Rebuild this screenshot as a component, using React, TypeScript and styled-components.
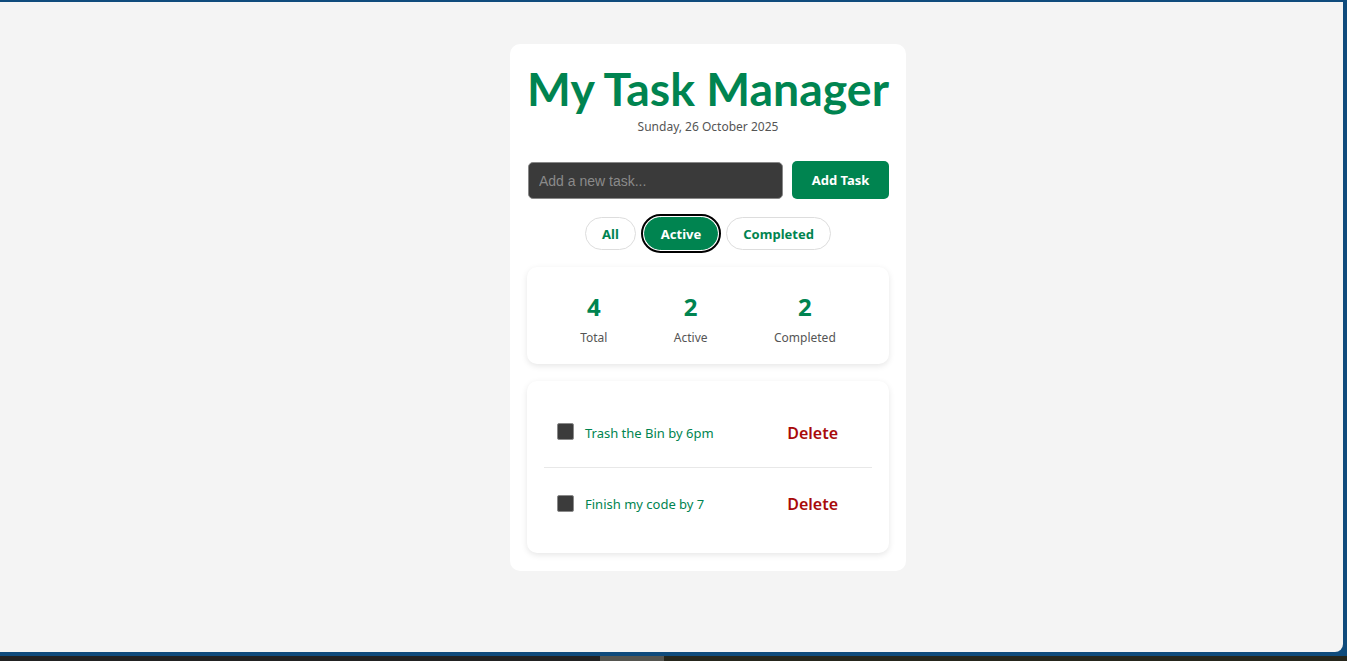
import React from "react";
import styled, { createGlobalStyle } from "styled-components";

const GlobalStyle = createGlobalStyle`
  html, body { margin: 0; padding: 0; }
  body { font-family: "Noto Sans", "Open Sans", sans-serif; overflow: hidden; }
  * { box-sizing: border-box; }
`;

const green = "#008450";

const Frame = styled.div`
  width: 1347px;
  height: 661px;
  background: #0f4b7c;
  display: flex;
  flex-direction: column;
`;

const Viewport = styled.div`
  height: 650px;
  margin: 2px 4px 4px 0;
  background: #f4f4f4;
  border-bottom-right-radius: 8px;
  display: flex;
  justify-content: center;
  align-items: flex-start;
  padding-top: 42px;
`;

const Taskbar = styled.div`
  flex: 1;
  display: flex;
  background: #202020;
`;

const TaskSeg = styled.div<{ $w: number; $c: string }>`
  width: ${(p) => p.$w}px;
  background: ${(p) => p.$c};
  flex: ${(p) => (p.$w === 0 ? 1 : "none")};
`;

const Card = styled.div`
  width: 396px;
  background: #fff;
  border-radius: 10px;
  padding: 18px 17px 18px 17px;
  margin-left: 73px;
  display: flex;
  flex-direction: column;
`;

const Title = styled.h1`
  margin: 0;
  text-align: center;
  color: ${green};
  font-family: Lato, "Noto Sans", sans-serif;
  font-size: 46.4px;
  font-weight: 700;
  line-height: 52px;
  white-space: nowrap;
`;

const DateText = styled.p`
  margin: 5px 0 0;
  text-align: center;
  color: #555;
  font-size: 12px;
  line-height: 16px;
`;

const InputRow = styled.div`
  display: flex;
  gap: 9px;
  margin-top: 26px;
  padding-left: 1px;
`;

const TaskInput = styled.input`
  flex: 1;
  height: 37px;
  margin-top: 1px;
  background: #3a3a3a;
  border: 1px solid #888;
  border-radius: 5px;
  padding: 0 10px;
  font-family: "Liberation Sans", Arial, sans-serif;
  font-size: 14px;
  color: #fff;
  &::placeholder { color: #8a8a8a; }
  outline: none;
`;

const AddButton = styled.button`
  width: 97px;
  height: 38px;
  background: ${green};
  color: #fff;
  border: none;
  border-radius: 5px;
  font-family: "Noto Sans", sans-serif;
  font-weight: 700;
  font-size: 13px;
`;

const Filters = styled.div`
  display: flex;
  justify-content: center;
  gap: 8px;
  margin-top: 18px;
`;

const FilterButton = styled.button<{ $active?: boolean }>`
  height: 33px;
  padding: 0 16px;
  border-radius: 17px;
  border: 1px solid ${(p) => (p.$active ? green : "#ddd")};
  background: ${(p) => (p.$active ? green : "#fff")};
  color: ${(p) => (p.$active ? "#fff" : green)};
  font-family: "Noto Sans", sans-serif;
  font-weight: 700;
  font-size: 13px;
  outline: ${(p) => (p.$active ? "2px solid #000" : "none")};
  outline-offset: ${(p) => (p.$active ? "1px" : "0")};
`;

const Panel = styled.div`
  background: #fff;
  border-radius: 10px;
  box-shadow: 0 2px 6px rgba(0, 0, 0, 0.1);
`;

const StatsPanel = styled(Panel)`
  margin-top: 17px;
  height: 97px;
  padding: 0 20px;
  display: flex;
  justify-content: space-around;
  align-items: center;
`;

const Stat = styled.div`
  display: flex;
  flex-direction: column;
  align-items: center;
  padding-top: 6px;
`;

const StatNum = styled.div`
  color: ${green};
  font-size: 24px;
  font-weight: 700;
  line-height: 30px;
`;

const StatLabel = styled.div`
  color: #555;
  font-size: 12px;
  line-height: 16px;
  margin-top: 8px;
`;

const ListPanel = styled(Panel)`
  margin-top: 17px;
  padding: 17px 17px 13px;
  display: flex;
  flex-direction: column;
`;

const Row = styled.div<{ $last?: boolean }>`
  display: flex;
  align-items: center;
  height: ${(p) => (p.$last ? 72 : 70)}px;
  padding: 0 34px 0 13px;
  border-bottom: ${(p) => (p.$last ? "none" : "1px solid #e8e8e8")};
`;

const Check = styled.span`
  width: 17px;
  height: 17px;
  background: #3b3b3b;
  border: 1px solid #8a8a8a;
  border-radius: 2px;
  margin-top: -2px;
`;

const TaskText = styled.span`
  flex: 1;
  margin-left: 11px;
  color: ${green};
  font-size: 13px;
`;

const DeleteButton = styled.button`
  background: none;
  border: none;
  padding: 0;
  color: #a80a0a;
  font-family: "Noto Sans", sans-serif;
  font-size: 16px;
  font-weight: 600;
`;

export default function App() {
  const tasks = ["Trash the Bin by 6pm", "Finish my code by 7"];
  return (
    <>
      <GlobalStyle />
      <Frame>
        <Viewport>
          <Card>
            <Title>My Task Manager</Title>
            <DateText>Sunday, 26 October 2025</DateText>
            <InputRow>
              <TaskInput placeholder="Add a new task..." />
              <AddButton>Add Task</AddButton>
            </InputRow>
            <Filters>
              <FilterButton>All</FilterButton>
              <FilterButton $active>Active</FilterButton>
              <FilterButton>Completed</FilterButton>
            </Filters>
            <StatsPanel>
              <Stat>
                <StatNum>4</StatNum>
                <StatLabel>Total</StatLabel>
              </Stat>
              <Stat>
                <StatNum>2</StatNum>
                <StatLabel>Active</StatLabel>
              </Stat>
              <Stat>
                <StatNum>2</StatNum>
                <StatLabel>Completed</StatLabel>
              </Stat>
            </StatsPanel>
            <ListPanel>
              {tasks.map((t, i) => (
                <Row key={t} $last={i === tasks.length - 1}>
                  <Check />
                  <TaskText>{t}</TaskText>
                  <DeleteButton>Delete</DeleteButton>
                </Row>
              ))}
            </ListPanel>
          </Card>
        </Viewport>
        <Taskbar>
          <TaskSeg $w={600} $c="#222222" />
          <TaskSeg $w={64} $c="#55554f" />
          <TaskSeg $w={0} $c="#26261c" />
        </Taskbar>
      </Frame>
    </>
  );
}
